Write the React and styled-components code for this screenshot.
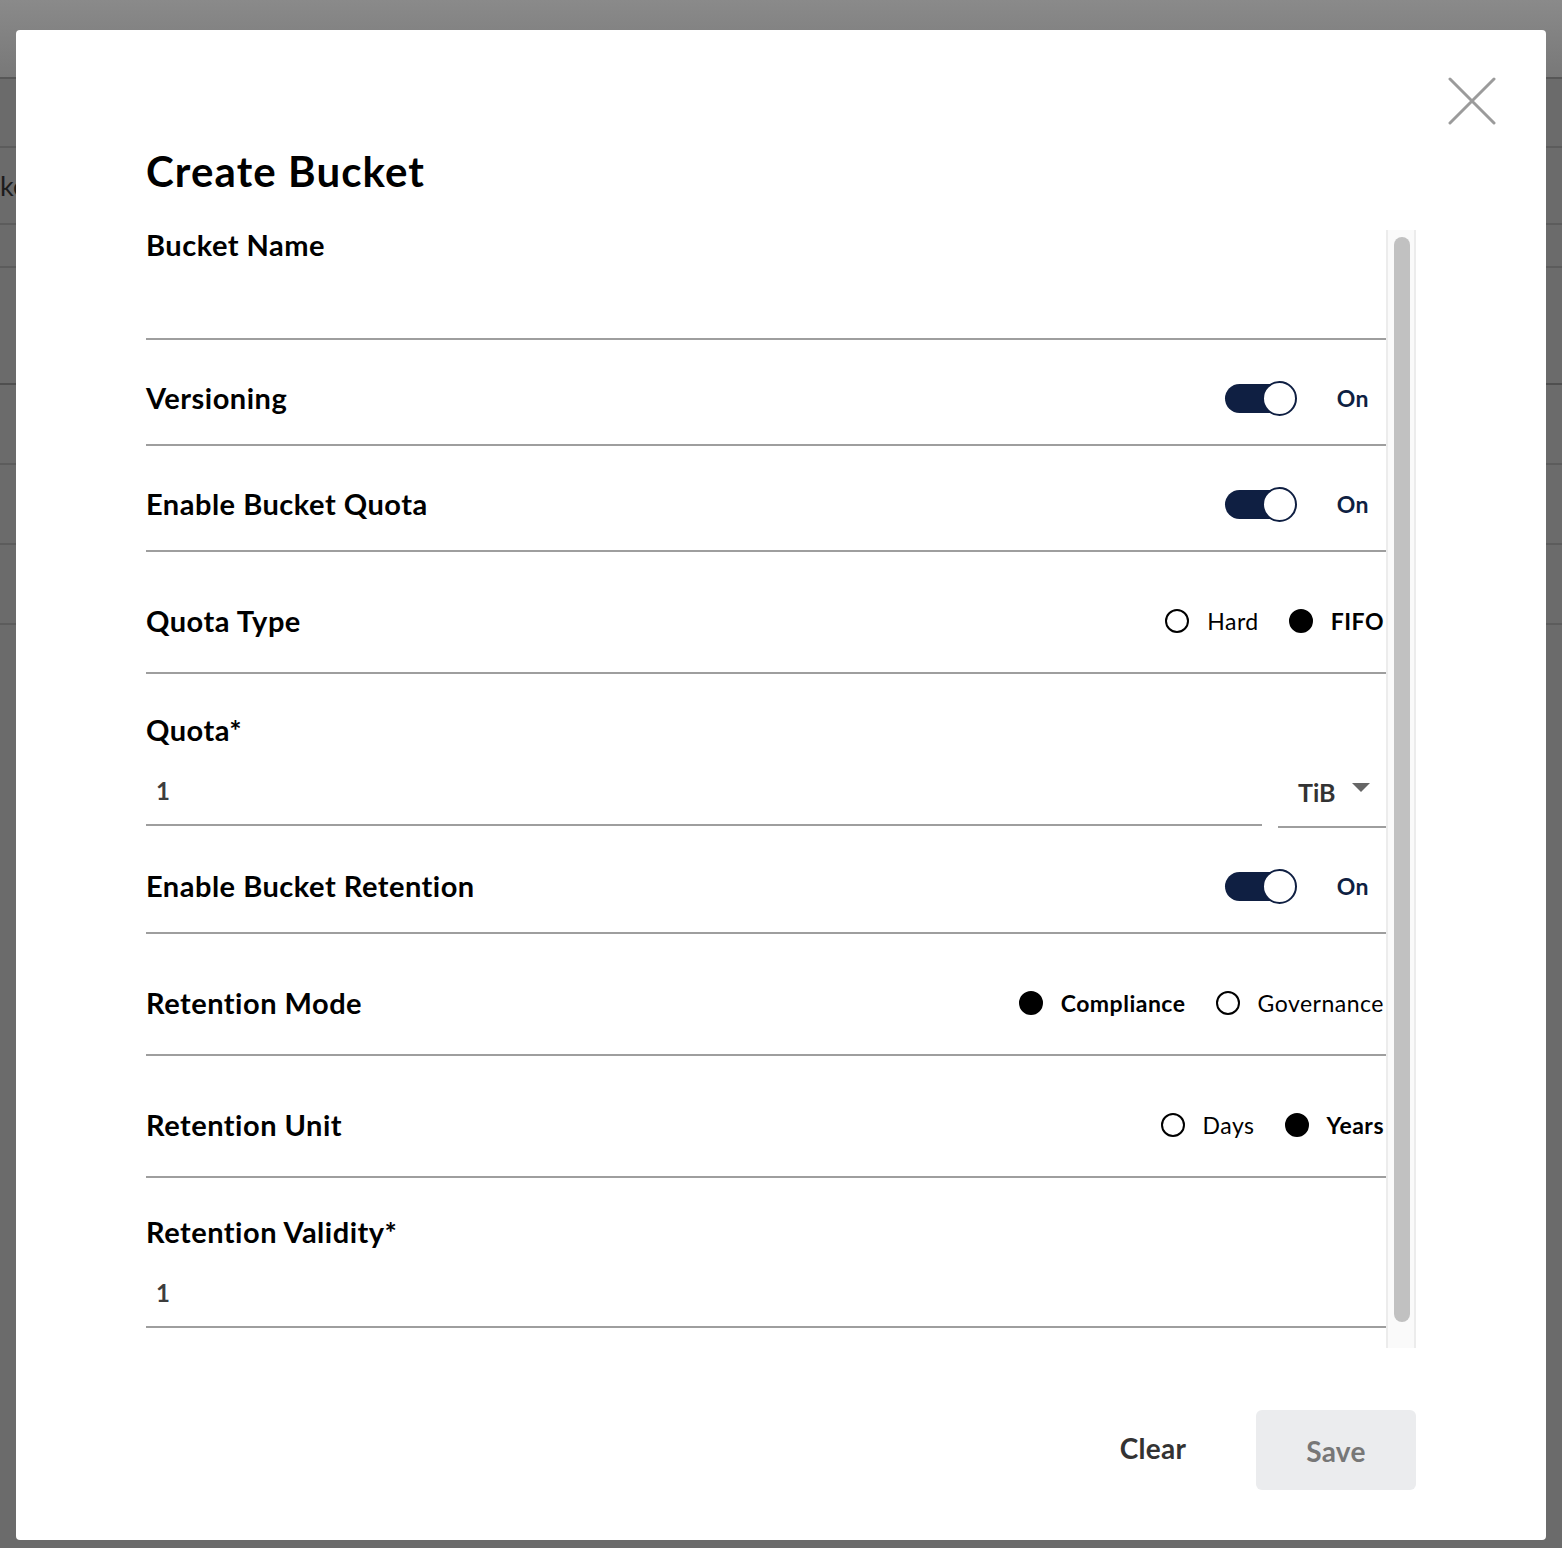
import React from 'react';
import styled, { createGlobalStyle } from 'styled-components';

const GlobalStyle = createGlobalStyle`
  html, body {
    margin: 0;
    padding: 0;
  }
  body {
    font-family: Lato, "Open Sans", "Liberation Sans", sans-serif;
    background: #6b6b6b;
    overflow: hidden;
  }
  * {
    box-sizing: border-box;
  }
`;

const Page = styled.div`
  position: relative;
  height: 1548px;
  overflow: hidden;
`;

const PageHeader = styled.div`
  height: 79px;
  background: linear-gradient(#8a8a8a, #787878);
  border-bottom: 2px solid #575757;
`;

const PageRow = styled.div`
  height: ${props => props.h}px;
  display: flex;
  align-items: center;
  border-bottom: 2px solid ${props => (props.dark ? '#4f4f4f' : '#5c5c5c')};
  font-size: 27px;
  color: #1c1c1c;
`;

const Overlay = styled.div`
  position: fixed;
  inset: 0;
  display: flex;
  justify-content: center;
  padding-top: 30px;
`;

const Modal = styled.div`
  position: relative;
  width: 1530px;
  height: 1510px;
  background: #fff;
  border-radius: 4px;
  padding: 117px 130px 50px;
  display: flex;
  flex-direction: column;
`;

const CloseButton = styled.button`
  position: absolute;
  top: 47px;
  right: 50px;
  width: 48px;
  height: 48px;
  padding: 0;
  border: none;
  background: none;
  cursor: pointer;
`;

const Title = styled.h1`
  margin: 0 0 35px;
  font-size: 42px;
  line-height: 48px;
  letter-spacing: 1.1px;
  font-weight: 700;
  color: #000;
`;

const ScrollArea = styled.div`
  height: 1118px;
  display: flex;
`;

const ScrollTrack = styled.div`
  width: 30px;
  height: 100%;
  flex: none;
  background: #fafafa;
  border-left: 2px solid #ececec;
  border-right: 2px solid #ececec;
  padding: 7px 4px 0 6px;
`;

const ScrollThumb = styled.div`
  height: 1085px;
  border-radius: 8px;
  background: #c1c1c1;
`;

const Form = styled.div`
  width: 1240px;
  flex: none;
`;

const Field = styled.div`
  padding-top: ${props => props.top || 0}px;
`;

const Label = styled.div`
  font-size: 29px;
  line-height: 34px;
  letter-spacing: 0.5px;
  font-weight: 700;
  color: #000;
`;

const NameLabel = styled(Label)`
  line-height: 30px;
  padding-bottom: 4px;
`;

const TextInput = styled.input`
  display: block;
  width: 100%;
  height: ${props => props.h || 79}px;
  padding: 10px 10px 0;
  border: none;
  border-bottom: 2px solid #9e9e9e;
  background: transparent;
  outline: none;
  font-family: inherit;
  font-size: 24px;
  font-weight: 700;
  color: #3d3d3d;
`;

const InputRow = styled.div`
  display: flex;
  gap: 16px;
  align-items: flex-start;
`;

const Select = styled.div`
  width: 108px;
  height: 81px;
  flex: none;
  display: flex;
  align-items: center;
  gap: 16px;
  padding: 10px 0 0 20px;
  border-bottom: 2px solid #9e9e9e;
  font-size: 25px;
  font-weight: 700;
  color: #333;
`;

const Caret = styled.span`
  width: 0;
  height: 0;
  margin-top: -8px;
  border-left: 9px solid transparent;
  border-right: 9px solid transparent;
  border-top: 9px solid #666;
`;

const Row = styled.div`
  display: flex;
  align-items: flex-start;
  justify-content: space-between;
  height: ${props => props.h}px;
  padding-top: ${props => props.top}px;
  border-bottom: 2px solid #9e9e9e;
`;

const RowLabel = styled(Label)`
  line-height: 36px;
`;

const SwitchGroup = styled.div`
  display: flex;
  align-items: center;
  height: 36px;
  padding-right: 17px;
`;

const Switch = styled.div`
  position: relative;
  width: 72px;
  height: 35px;
  display: flex;
  align-items: center;
`;

const Track = styled.div`
  width: 64px;
  height: 29px;
  border-radius: 15px;
  background: #0f1f42;
`;

const Knob = styled.div`
  position: absolute;
  right: 0;
  top: 0;
  width: 35px;
  height: 35px;
  border-radius: 50%;
  background: #fff;
  border: 2px solid #0f1f42;
`;

const SwitchText = styled.span`
  margin-left: 40px;
  font-size: 23px;
  letter-spacing: 0.5px;
  font-weight: 700;
  color: #0f1f42;
`;

const RadioGroup = styled.div`
  display: flex;
  align-items: center;
  gap: 30px;
  height: 36px;
  padding-right: 2px;
`;

const RadioOption = styled.label`
  display: flex;
  align-items: center;
  gap: 18px;
  font-size: 23px;
  letter-spacing: 0.5px;
  font-weight: ${props => (props.checked ? 700 : 400)};
  color: #000;
`;

const RadioDot = styled.span`
  width: 24px;
  height: 24px;
  border-radius: 50%;
  border: 2px solid #000;
  background: ${props => (props.checked ? '#000' : '#fff')};
`;

const Footer = styled.div`
  margin-top: auto;
  display: flex;
  justify-content: flex-end;
  gap: 23px;
`;

const Button = styled.button`
  width: 160px;
  height: 80px;
  border: none;
  border-radius: 6px;
  font-family: inherit;
  font-size: 28px;
  letter-spacing: 0.3px;
  font-weight: 700;
  background: ${props => (props.primary ? '#ebecee' : 'transparent')};
  color: ${props => (props.primary ? '#777' : '#333')};
  padding: ${props => (props.primary ? '2px 0 0' : '0 0 4px')};
`;

const ToggleRow = ({ label }) => (
  <Row h={106} top={40}>
    <RowLabel>{label}</RowLabel>
    <SwitchGroup>
      <Switch>
        <Track />
        <Knob />
      </Switch>
      <SwitchText>On</SwitchText>
    </SwitchGroup>
  </Row>
);

const RadioRow = ({ label, options }) => (
  <Row h={122} top={51}>
    <RowLabel>{label}</RowLabel>
    <RadioGroup>
      {options.map(o => (
        <RadioOption key={o.text} checked={o.checked}>
          <RadioDot checked={o.checked} />
          {o.text}
        </RadioOption>
      ))}
    </RadioGroup>
  </Row>
);

const CloseIcon = () => (
  <svg width="48" height="48" viewBox="0 0 48 48">
    <path d="M2 2 L46 46 M46 2 L2 46" stroke="#9b9b9b" strokeWidth="3" strokeLinecap="round" fill="none" />
  </svg>
);

export default function App() {
  return (
    <>
      <GlobalStyle />
      <Page>
        <PageHeader />
        <PageRow h={69} />
        <PageRow h={77}>ke</PageRow>
        <PageRow h={43} />
        <PageRow h={117} dark />
        <PageRow h={80} />
        <PageRow h={80} />
        <PageRow h={80} />
      </Page>
      <Overlay>
        <Modal>
          <CloseButton aria-label="Close">
            <CloseIcon />
          </CloseButton>
          <Title>Create Bucket</Title>
          <ScrollArea>
            <Form>
              <Field>
                <NameLabel>Bucket Name</NameLabel>
                <TextInput h={76} defaultValue="" />
              </Field>
              <ToggleRow label="Versioning" />
              <ToggleRow label="Enable Bucket Quota" />
              <RadioRow
                label="Quota Type"
                options={[{ text: 'Hard' }, { text: 'FIFO', checked: true }]}
              />
              <Field top={39}>
                <Label>Quota*</Label>
                <InputRow>
                  <TextInput defaultValue="1" />
                  <Select>
                    TiB
                    <Caret />
                  </Select>
                </InputRow>
              </Field>
              <ToggleRow label="Enable Bucket Retention" />
              <RadioRow
                label="Retention Mode"
                options={[{ text: 'Compliance', checked: true }, { text: 'Governance' }]}
              />
              <RadioRow
                label="Retention Unit"
                options={[{ text: 'Days' }, { text: 'Years', checked: true }]}
              />
              <Field top={37}>
                <Label>Retention Validity*</Label>
                <TextInput defaultValue="1" />
              </Field>
            </Form>
            <ScrollTrack>
              <ScrollThumb />
            </ScrollTrack>
          </ScrollArea>
          <Footer>
            <Button>Clear</Button>
            <Button primary>Save</Button>
          </Footer>
        </Modal>
      </Overlay>
    </>
  );
}
